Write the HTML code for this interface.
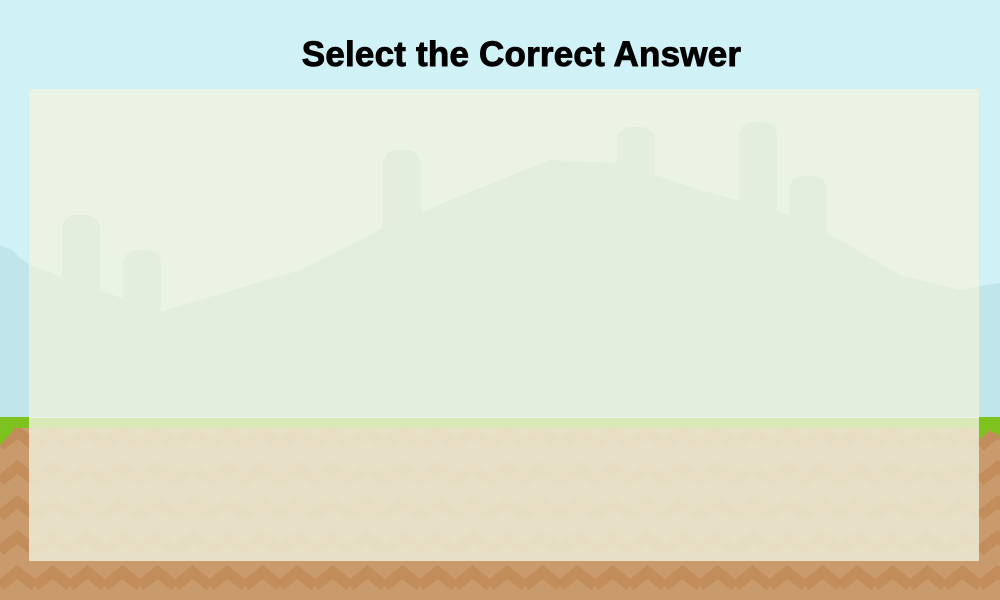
<!DOCTYPE html>
<html><head><style>
html,body{margin:0;padding:0}
body{width:1000px;height:600px;position:relative;overflow:hidden;background:#d0f2f7;font-family:"Liberation Sans",sans-serif}
svg{position:absolute;left:0;top:0}
h1{position:absolute;left:0;width:1043px;top:35px;margin:0;text-align:center;font-size:35px;font-weight:bold;color:#000;letter-spacing:0.2px;-webkit-text-stroke:0.9px #000}
.p1{position:absolute;left:29px;top:89px;width:950px;height:328px;background:rgba(255,244,213,0.56)}
.ln{position:absolute;left:29px;top:417px;width:950px;height:1px;background:#eef3e4}
.p2{position:absolute;left:29px;top:418px;width:950px;height:143px;background:rgba(240,241,221,0.8)}
</style></head><body>
<svg width="1000" height="600" viewBox="0 0 1000 600">
<defs>
<pattern id="z" x="0" y="428" width="35" height="35" patternUnits="userSpaceOnUse">
<rect width="35" height="35" fill="#c99a6c"/>
<polyline points="0,18 17.5,4 35,18" fill="none" stroke="#c28d5a" stroke-width="11"/>
<polyline points="0,53 17.5,39 35,53" fill="none" stroke="#c28d5a" stroke-width="11"/>
<polyline points="0,-17 17.5,-31 35,-17" fill="none" stroke="#c28d5a" stroke-width="11"/>
</pattern>
</defs>
<polygon points="0,245 12,250 20,258 30,265 160,312 300,270 380,230 450,200 550,160 620,163 700,190 780,212 840,240 900,275 960,290 985,285 1000,283 1000,417 0,417" fill="#c0e6ec"/>
<g fill="#c0e6ec">
<rect x="62" y="215" width="38" height="100" rx="14"/>
<rect x="123" y="250" width="38" height="70" rx="14"/>
<rect x="383" y="150" width="38" height="100" rx="14"/>
<rect x="617" y="127" width="38" height="100" rx="14"/>
<rect x="739" y="122" width="38" height="100" rx="14"/>
<rect x="789" y="176" width="38" height="100" rx="14"/>
</g>
<rect x="0" y="417" width="1000" height="183" fill="url(#z)"/>
<path d="M0,417 H1000 V428 H0 Z" fill="#7dc21e"/>
<path d="M0,428 L0,445 L14,430 L14,428 Z" fill="#7dc21e"/>
<path d="M979,428 L979,440 L990,430 L1000,436 L1000,428 Z" fill="#7dc21e"/>
</svg>
<div class="p1"></div>
<div class="ln"></div>
<div class="p2"></div>
<h1>Select the Correct Answer</h1>
</body></html>
